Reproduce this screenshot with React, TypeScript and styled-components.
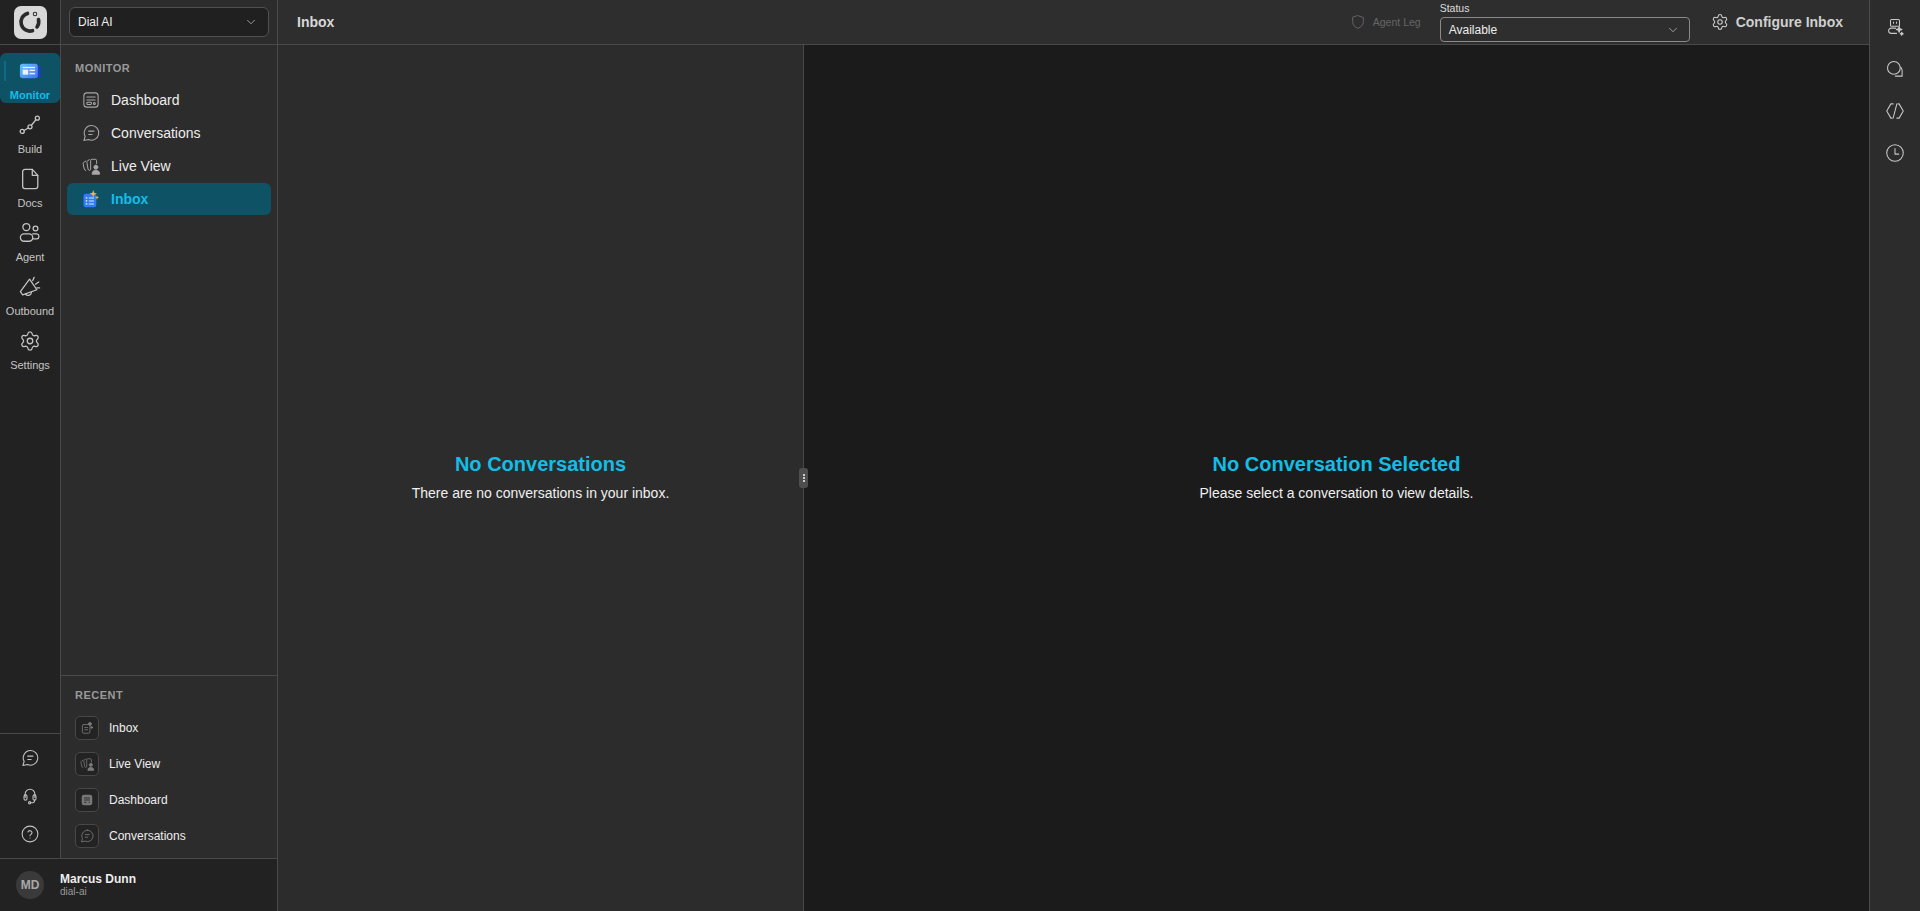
import React from "react";
import styled, { createGlobalStyle } from "styled-components";
import { ChevronDown, Settings } from "lucide-react";

const BORDER = "#4a4a4a";
const BLUE = "#14bde6";
const ACTIVE_BG = "#0e5266";

const GlobalStyle = createGlobalStyle`
  html, body { margin: 0; padding: 0; height: 100%; background: #1b1b1b; }
  body { font-family: "Liberation Sans", Arial, sans-serif; color: #f2f2f2; overflow: hidden; }
  #root { height: 100%; }
  * { box-sizing: border-box; }
`;

const Page = styled.div`
  display: flex;
  height: 911px;
  width: 1920px;
`;
const LeftColumn = styled.aside`
  width: 278px;
  flex: none;
  display: flex;
  flex-direction: column;
  border-right: 1px solid ${BORDER};
  background: #222;
`;
const LeftTop = styled.div`
  flex: 1;
  min-height: 0;
  display: flex;
`;
const Rail = styled.nav`
  width: 61px;
  flex: none;
  display: flex;
  flex-direction: column;
  border-right: 1px solid ${BORDER};
  background: #222;
`;
const LogoCell = styled.div`
  height: 45px;
  flex: none;
  display: flex;
  align-items: center;
  justify-content: center;
  border-bottom: 1px solid ${BORDER};
`;
const LogoBox = styled.div`
  width: 33px;
  height: 33px;
  border-radius: 7px;
  background: #d8d8d8;
  display: flex;
  align-items: center;
  justify-content: center;
`;
const RailItems = styled.div`
  flex: 1;
  display: flex;
  flex-direction: column;
  gap: 4px;
  padding-top: 8px;
`;
const RailItem = styled.div<{ $active?: boolean }>`
  position: relative;
  width: 60px;
  height: 50px;
  border-radius: 6px;
  display: flex;
  flex-direction: column;
  align-items: center;
  padding-top: 7px;
  gap: 6px;
  font-size: 11px;
  line-height: 14px;
  color: ${(p) => (p.$active ? BLUE : "#c4c4c4")};
  font-weight: ${(p) => (p.$active ? 600 : 400)};
  background: ${(p) => (p.$active ? ACTIVE_BG : "transparent")};
`;
const RailMarker = styled.span`
  position: absolute;
  left: 4px;
  top: 8px;
  width: 2px;
  height: 20px;
  background: #0e6a85;
`;
const RailBottom = styled.div`
  height: 125px;
  flex: none;
  border-top: 1px solid ${BORDER};
  display: flex;
  flex-direction: column;
  align-items: center;
  padding-top: 15px;
  gap: 20px;
  color: #c4c4c4;
`;
const Sidebar = styled.div`
  flex: 1;
  min-width: 0;
  display: flex;
  flex-direction: column;
  background: #2c2c2c;
`;
const SelectCell = styled.div`
  height: 45px;
  flex: none;
  padding: 7px 8px;
  border-bottom: 1px solid ${BORDER};
  background: #2c2c2c;
`;
const WorkspaceSelect = styled.div`
  height: 30px;
  border: 1px solid #505050;
  border-radius: 6px;
  background: #202020;
  display: flex;
  align-items: center;
  justify-content: space-between;
  padding: 0 10px 0 8px;
  font-size: 12px;
  color: #eee;
`;
const SidebarMain = styled.div`
  flex: 1;
  padding: 17px 6px 0;
`;
const SectionLabel = styled.div`
  font-size: 11px;
  line-height: 13px;
  font-weight: 600;
  letter-spacing: 0.5px;
  color: #9a9a9a;
  padding-left: 8px;
`;
const NavList = styled.div`
  margin-top: 9px;
  display: flex;
  flex-direction: column;
  gap: 1px;
`;
const NavItem = styled.div<{ $active?: boolean }>`
  height: 32px;
  border-radius: 6px;
  display: flex;
  align-items: center;
  gap: 11px;
  padding-left: 15px;
  font-size: 14px;
  color: ${(p) => (p.$active ? BLUE : "#eee")};
  font-weight: ${(p) => (p.$active ? 600 : 400)};
  background: ${(p) => (p.$active ? ACTIVE_BG : "transparent")};
`;
const NavIcon = styled.span`
  width: 18px;
  height: 18px;
  flex: none;
  display: flex;
  color: #a8a8a8;
`;
const RecentSection = styled.div`
  height: 183px;
  flex: none;
  border-top: 1px solid ${BORDER};
  padding: 13px 0 0 6px;
`;
const RecentList = styled.div`
  margin-top: 14px;
  display: flex;
  flex-direction: column;
  gap: 12px;
  padding-left: 8px;
`;
const RecentItem = styled.div`
  height: 24px;
  display: flex;
  align-items: center;
  gap: 10px;
  font-size: 12px;
  color: #eee;
`;
const RecentIcon = styled.span`
  width: 24px;
  height: 24px;
  flex: none;
  border: 1px solid #484848;
  border-radius: 5px;
  background: #232323;
  display: flex;
  align-items: center;
  justify-content: center;
  color: #7c7c7c;
`;
const UserBar = styled.div`
  height: 53px;
  flex: none;
  border-top: 1px solid ${BORDER};
  background: #222;
  display: flex;
  align-items: center;
  gap: 16px;
  padding-left: 16px;
`;
const Avatar = styled.div`
  width: 28px;
  height: 28px;
  border-radius: 50%;
  background: #3a3a3a;
  color: #a8a8a8;
  font-size: 12px;
  font-weight: 700;
  display: flex;
  align-items: center;
  justify-content: center;
`;
const UserName = styled.div`
  font-size: 12px;
  line-height: 14px;
  font-weight: 700;
  color: #eee;
`;
const UserOrg = styled.div`
  font-size: 10px;
  line-height: 12px;
  color: #9a9a9a;
`;
const Center = styled.main`
  flex: 1;
  min-width: 0;
  display: flex;
  flex-direction: column;
`;
const Header = styled.header`
  height: 45px;
  flex: none;
  display: flex;
  align-items: center;
  padding: 0 26px 0 19px;
  background: #2e2e2e;
  border-bottom: 1px solid ${BORDER};
`;
const HeaderTitle = styled.div`
  font-size: 14px;
  font-weight: 600;
  color: #d8d8d8;
  flex: 1;
`;
const AgentLeg = styled.div`
  display: flex;
  align-items: center;
  gap: 7px;
  font-size: 10.5px;
  color: #666;
  margin-right: 19px;
`;
const StatusField = styled.div`
  width: 250px;
`;
const StatusLabel = styled.div`
  font-size: 10.5px;
  line-height: 13px;
  color: #ddd;
  margin-bottom: 2px;
`;
const StatusSelect = styled.div`
  height: 25px;
  border: 1px solid #8a8a8a;
  border-radius: 4px;
  background: #2e2e2e;
  display: flex;
  align-items: center;
  justify-content: space-between;
  padding: 0 9px 0 8px;
  font-size: 12px;
  color: #eee;
`;
const ConfigureButton = styled.div`
  margin-left: 21px;
  display: flex;
  align-items: center;
  gap: 7px;
  font-size: 14px;
  font-weight: 700;
  color: #d0d0d0;
`;
const Panes = styled.div`
  flex: 1;
  min-height: 0;
  display: flex;
`;
const ListPane = styled.section`
  position: relative;
  width: 526px;
  flex: none;
  background: #2c2c2c;
  border-right: 1px solid ${BORDER};
  display: flex;
  flex-direction: column;
  align-items: center;
  justify-content: center;
  padding-bottom: 3px;
`;
const DetailPane = styled.section`
  flex: 1;
  background: #1b1b1b;
  display: flex;
  flex-direction: column;
  align-items: center;
  justify-content: center;
  padding-bottom: 3px;
`;
const EmptyTitle = styled.h2`
  margin: 0 0 6px;
  font-size: 20px;
  line-height: 26px;
  font-weight: 600;
  color: ${BLUE};
`;
const EmptyText = styled.p`
  margin: 0;
  font-size: 14px;
  line-height: 20px;
  color: #f0f0f0;
`;
const ResizeHandle = styled.div`
  position: absolute;
  right: -5px;
  top: 423px;
  width: 9px;
  height: 20px;
  border-radius: 3px;
  background: #4e4e4e;
  display: flex;
  flex-direction: column;
  align-items: center;
  justify-content: center;
  gap: 1px;
`;
const HandleDot = styled.span`
  width: 2px;
  height: 2px;
  background: #ccc;
`;
const RightRail = styled.aside`
  width: 51px;
  flex: none;
  background: #2c2c2c;
  border-left: 1px solid ${BORDER};
  display: flex;
  flex-direction: column;
  align-items: center;
  padding-top: 18px;
  gap: 24px;
  color: #c8c8c8;
`;

const Icon: React.FC<{ size?: number; children: React.ReactNode }> = ({ size = 22, children }) => (
  <svg width={size} height={size} viewBox="0 0 24 24" fill="none" stroke="currentColor" strokeWidth={1.4} strokeLinecap="round" strokeLinejoin="round">
    {children}
  </svg>
);

const MonitorIcon = () => (
  <svg width="22" height="22" viewBox="0 0 24 24">
    <defs>
      <linearGradient id="monitorFront" x1="0" y1="0" x2="1" y2="1">
        <stop offset="0" stopColor="#6cc0fa" />
        <stop offset="1" stopColor="#3f78f2" />
      </linearGradient>
    </defs>
    <rect x="8" y="6" width="15.5" height="14" rx="3" fill="#1f3fc0" />
    <rect x="1" y="4" width="19.5" height="16" rx="3" fill="url(#monitorFront)" />
    <rect x="4" y="7.5" width="13.5" height="1.4" fill="#e8f3ff" />
    <rect x="4" y="10.5" width="6" height="5.5" fill="#e8f3ff" />
    <rect x="11.5" y="10.5" width="6" height="1.6" fill="#e8f3ff" />
    <rect x="11.5" y="14" width="6" height="1.6" fill="#e8f3ff" />
  </svg>
);
const BuildIcon = () => (
  <Icon>
    <circle cx="3.5" cy="19" r="2.2" />
    <circle cx="12" cy="14" r="2.2" />
    <circle cx="20" cy="4.5" r="2.2" />
    <path d="M5.5 18l4.600-2.800M13.500 12.300l5-6" />
  </Icon>
);
const DocsIcon = () => (
  <Icon>
    <path d="M6.5 1.5h8l6 6.5v12a2.5 2.5 0 0 1-2.5 2.5H6.500A2.500 2.500 0 0 1 4 20v-16a2.500 2.500 0 0 1 2.500-2.500z" />
    <path d="M14.5 1.5v6.500h6" />
  </Icon>
);
const AgentIcon = () => (
  <Icon>
    <circle cx="8" cy="5.5" r="3.8" />
    <circle cx="18" cy="7" r="2.6" />
    <rect x="1.5" y="13" width="13.5" height="8" rx="4" />
    <path d="M15 13h4.500a2.800 2.800 0 0 1 0 5.500H15" />
  </Icon>
);
const OutboundIcon = () => (
  <Icon>
    <path d="M11.5 3.500L19.500 15 4 20.500 1.500 17z" />
    <path d="M7 19.500a3.500 3.500 0 0 0 6.500-1.500M15 5l1.500-3.500M18 9l3.500-2.500M19.500 13h3" />
  </Icon>
);
const DashboardIcon = () => (
  <Icon size={18}>
    <rect x="2.5" y="2.5" width="19" height="19" rx="4" />
    <path d="M6.5 8h11M6.500 12h11" />
    <rect x="6.5" y="15" width="6" height="3" rx="1" />
    <circle cx="16.5" cy="16.5" r="1.3" />
  </Icon>
);
const ChatIcon: React.FC<{ size?: number }> = ({ size = 18 }) => (
  <Icon size={size}>
    <path d="M12.5 2a9.800 9.800 0 1 1-3.800 18.800L2.500 22l1.700-5.500A9.800 9.800 0 0 1 12.500 2z" />
    <path d="M9 9.500h7M9 14h4.500" />
  </Icon>
);
const LiveViewIcon: React.FC<{ size?: number }> = ({ size = 18 }) => (
  <svg width={size} height={size} viewBox="0 0 24 24" fill="none" stroke="currentColor" strokeWidth={1.3} strokeLinecap="round" strokeLinejoin="round">
    <path d="M5 5.500L2.500 7a2 2 0 0 0-1 2l1.500 7a3 3 0 0 0 2 2" />
    <path d="M10 3.500L7.500 5a2 2 0 0 0-1 2l1.500 9a3 3 0 0 0 2 2" />
    <path d="M11.500 17V5a2 2 0 0 1 2-2h4a2 2 0 0 1 2 2v4" />
    <circle cx="18.5" cy="13.5" r="2.6" fill="currentColor" />
    <path d="M13.500 22.500c0-3.400 2.200-5 5-5s5 1.600 5 5z" fill="currentColor" />
  </svg>
);
const InboxIcon = () => (
  <svg width="18" height="18" viewBox="0 0 24 24">
    <rect x="2" y="5" width="17" height="18" rx="3" fill="#2f7df0" />
    <g fill="#dbeaff">
      <rect x="5" y="9.5" width="2" height="2" />
      <rect x="5" y="13.5" width="2" height="2" />
      <rect x="5" y="17.5" width="2" height="2" />
      <rect x="9" y="10" width="7" height="1.3" />
      <rect x="9" y="14" width="7" height="1.3" />
      <rect x="9" y="18" width="7" height="1.3" />
    </g>
    <path d="M15 0l1.200 3.800L20 5l-3.800 1.200L15 10l-1.200-3.800L10 5l3.800-1.200z" fill="#f6b73c" />
    <path d="M20 7l.8 2.200 2.200.8-2.200.8L20 13l-.8-2.200L17 10l2.200-.8z" fill="#f6b73c" />
  </svg>
);
const RecentInboxIcon = () => (
  <Icon size={14}>
    <rect x="4" y="6" width="13" height="15" rx="2.5" />
    <path d="M8 11h5M8 15h5" />
    <circle cx="17" cy="5" r="2.5" fill="currentColor" />
    <circle cx="20" cy="11" r="1.5" fill="currentColor" />
  </Icon>
);
const RecentDashboardIcon = () => (
  <svg width="14" height="14" viewBox="0 0 24 24">
    <rect x="3" y="3" width="18" height="18" rx="4" fill="#777" />
    <path d="M7 8.500h10M7 12h10M7 16h4M15 16h2" stroke="#2a2a2a" strokeWidth="1.6" />
  </svg>
);
const HeadsetIcon = () => (
  <Icon size={18}>
    <path d="M5.500 14V9.500a6.500 6.500 0 0 1 13 0V14" />
    <rect x="4" y="10.5" width="4" height="7" rx="2" />
    <rect x="16" y="10.5" width="4" height="7" rx="2" />
    <path d="M18 17.500v1a2.500 2.500 0 0 1-2.500 2.500H13" />
    <circle cx="11.5" cy="21" r="1.5" />
  </Icon>
);
const HelpIcon = () => (
  <Icon size={18}>
    <circle cx="12" cy="12" r="10.5" />
    <path d="M9.300 9.300a2.800 2.800 0 0 1 5.400 1c0 1.900-2.700 2.300-2.700 3.900" />
    <path d="M12 17.300v.1" />
  </Icon>
);
const BotPlusIcon = () => (
  <Icon size={18}>
    <rect x="6" y="2" width="12" height="9" rx="1.5" />
    <path d="M10 5.500v1.500M14 5.500v1.500" />
    <path d="M13 13.500H7a3.500 3.500 0 0 0 0 7h7" />
    <path d="M17.500 11.500l1 2.800 2.800 1-2.800 1-1 2.800-1-2.800-2.800-1 2.800-1z" fill="currentColor" />
    <path d="M21 19l.6 1.400 1.400.6-1.400.6-.6 1.400-.6-1.400-1.400-.6 1.400-.6z" fill="currentColor" />
  </Icon>
);
const ChatsIcon = () => (
  <Icon size={18}>
    <path d="M10.500 2a8.500 8.500 0 1 0 0 17 8.500 8.500 0 0 0 0-17z" />
    <path d="M19.500 9.500A8 8 0 0 1 21.500 14v7.500h-9" />
  </Icon>
);
const CodeIcon = () => (
  <Icon size={18}>
    <path d="M9.500 2.500H6.500L1 12l5.500 9.500H8" />
    <path d="M16 2.500h1.500L23 12l-5.500 9.500h-3" />
    <path d="M14.500 2.500l-5 19" />
  </Icon>
);
const ClockIcon = () => (
  <Icon size={18}>
    <circle cx="12" cy="12" r="11" />
    <path d="M12 6v7.500h5" />
  </Icon>
);
const ShieldIcon = () => (
  <Icon size={16}>
    <path d="M12 2.500l8 2.800v6.200c0 5-3.500 8.300-8 10-4.500-1.700-8-5-8-10V5.300z" />
  </Icon>
);
const LogoMark = () => (
  <svg width="26" height="26" viewBox="0 0 26 26" fill="none" stroke="#2a2a2a" strokeWidth="3.6" strokeLinecap="round">
    <path d="M10.500 4.400A9 9 0 1 0 15.500 21.700" />
    <path d="M21.500 10.500a9 9 0 0 1-1.500 7.500" />
    <circle cx="18" cy="5" r="0.5" />
  </svg>
);

const railItems = [
  { label: "Monitor", icon: <MonitorIcon />, active: true },
  { label: "Build", icon: <BuildIcon /> },
  { label: "Docs", icon: <DocsIcon /> },
  { label: "Agent", icon: <AgentIcon /> },
  { label: "Outbound", icon: <OutboundIcon /> },
  { label: "Settings", icon: <Settings size={22} strokeWidth={1.4} /> },
];

const navItems = [
  { label: "Dashboard", icon: <DashboardIcon /> },
  { label: "Conversations", icon: <ChatIcon /> },
  { label: "Live View", icon: <LiveViewIcon /> },
  { label: "Inbox", icon: <InboxIcon />, active: true },
];

const recentItems = [
  { label: "Inbox", icon: <RecentInboxIcon /> },
  { label: "Live View", icon: <LiveViewIcon size={14} /> },
  { label: "Dashboard", icon: <RecentDashboardIcon /> },
  { label: "Conversations", icon: <ChatIcon size={14} /> },
];

export default function App() {
  return (
    <>
      <GlobalStyle />
      <Page>
        <LeftColumn>
          <LeftTop>
            <Rail>
              <LogoCell>
                <LogoBox>
                  <LogoMark />
                </LogoBox>
              </LogoCell>
              <RailItems>
                {railItems.map((item) => (
                  <RailItem key={item.label} $active={item.active}>
                    {item.active && <RailMarker />}
                    {item.icon}
                    {item.label}
                  </RailItem>
                ))}
              </RailItems>
              <RailBottom>
                <ChatIcon />
                <HeadsetIcon />
                <HelpIcon />
              </RailBottom>
            </Rail>
            <Sidebar>
              <SelectCell>
                <WorkspaceSelect>
                  Dial AI
                  <ChevronDown size={14} color="#aaa" strokeWidth={1.5} />
                </WorkspaceSelect>
              </SelectCell>
              <SidebarMain>
                <SectionLabel>MONITOR</SectionLabel>
                <NavList>
                  {navItems.map((item) => (
                    <NavItem key={item.label} $active={item.active}>
                      <NavIcon>{item.icon}</NavIcon>
                      {item.label}
                    </NavItem>
                  ))}
                </NavList>
              </SidebarMain>
              <RecentSection>
                <SectionLabel>RECENT</SectionLabel>
                <RecentList>
                  {recentItems.map((item) => (
                    <RecentItem key={item.label}>
                      <RecentIcon>{item.icon}</RecentIcon>
                      {item.label}
                    </RecentItem>
                  ))}
                </RecentList>
              </RecentSection>
            </Sidebar>
          </LeftTop>
          <UserBar>
            <Avatar>MD</Avatar>
            <div>
              <UserName>Marcus Dunn</UserName>
              <UserOrg>dial-ai</UserOrg>
            </div>
          </UserBar>
        </LeftColumn>
        <Center>
          <Header>
            <HeaderTitle>Inbox</HeaderTitle>
            <AgentLeg>
              <ShieldIcon />
              Agent Leg
            </AgentLeg>
            <StatusField>
              <StatusLabel>Status</StatusLabel>
              <StatusSelect>
                Available
                <ChevronDown size={14} color="#aaa" strokeWidth={1.5} />
              </StatusSelect>
            </StatusField>
            <ConfigureButton>
              <Settings size={18} strokeWidth={1.4} />
              Configure Inbox
            </ConfigureButton>
          </Header>
          <Panes>
            <ListPane>
              <EmptyTitle>No Conversations</EmptyTitle>
              <EmptyText>There are no conversations in your inbox.</EmptyText>
              <ResizeHandle>
                <HandleDot />
                <HandleDot />
                <HandleDot />
              </ResizeHandle>
            </ListPane>
            <DetailPane>
              <EmptyTitle>No Conversation Selected</EmptyTitle>
              <EmptyText>Please select a conversation to view details.</EmptyText>
            </DetailPane>
          </Panes>
        </Center>
        <RightRail>
          <BotPlusIcon />
          <ChatsIcon />
          <CodeIcon />
          <ClockIcon />
        </RightRail>
      </Page>
    </>
  );
}
